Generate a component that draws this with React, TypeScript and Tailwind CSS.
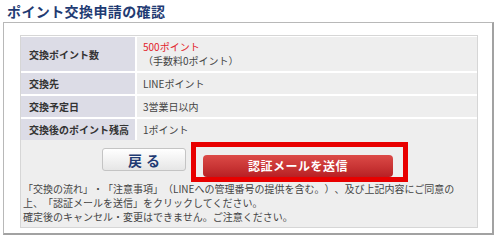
const rows = [
  { label: '交換先', value: 'LINEポイント' },
  { label: '交換予定日', value: '3営業日以内' },
  { label: '交換後のポイント残高', value: '1ポイント' },
];

export default function App() {
  return (
    <div className="w-[500px] h-[239px] bg-white font-['Noto_Sans_CJK_JP','Noto_Sans',sans-serif] text-[#444] [text-spacing-trim:space-all]">
      {/* Title */}
      <div className="h-[22px] pl-[7px] pt-[2px] text-[14px] leading-[18px] font-bold tracking-[0.4px] text-[#1f3b73]">
        ポイント交換申請の確認
      </div>

      {/* Outer frame */}
      <div className="ml-[3px] w-[491px] h-[213px] border border-[#b8b8b8] border-r-2 border-b-2 border-r-[#a2a2a2] border-b-[#a2a2a2] pl-[16px] pt-[12px]">
        <div className="w-[458px] h-[193px] border border-[#d6d6d6] bg-[#eeeeee]">
          {/* Table */}
          <div className="grid grid-cols-[114px_1fr] gap-x-[2px] gap-y-[2px] bg-white pt-px text-[10px]">
            <div className="h-[34px] flex items-center pl-[8px] bg-[#dcdce6] font-bold text-[#333]">
              交換ポイント数
            </div>
            <div className="h-[34px] flex flex-col justify-center pl-[6px] bg-[#eeeeee] leading-[14px]">
              <span className="text-[#e2232a]">500ポイント</span>
              <span>（手数料0ポイント）</span>
            </div>
            {rows.map((r) => (
              <div key={r.label} className="contents">
                <div className="h-[21px] flex items-center pl-[8px] bg-[#dcdce6] font-bold text-[#333]">
                  {r.label}
                </div>
                <div className="h-[21px] flex items-center pl-[6px] bg-[#eeeeee]">{r.value}</div>
              </div>
            ))}
          </div>

          {/* Buttons */}
          <div className="flex items-start pl-[81px] mt-[2px]">
            <button className="mt-[6px] w-[84px] h-[23px] rounded-[3px] border border-[#c4c4c4] bg-gradient-to-b from-white to-[#e6e6e6] text-[14px] leading-none font-bold text-[#1f3b73] tracking-[4px] pl-[4px]">
              戻る
            </button>
            <div className="ml-[5px] w-[217px] h-[40px] border-[5px] border-[#e80000] pl-[7px] pt-[5px]">
              <button className="w-[190px] h-[22px] rounded-[4px] bg-gradient-to-b from-[#dc4a47] to-[#b81f24] text-[12px] leading-none font-bold text-white tracking-[0.5px]">
                認証メールを送信
              </button>
            </div>
          </div>

          {/* Notes */}
          <div className="pl-[2px] text-[10px] leading-[14px] text-[#444]">
            <p>「交換の流れ」・「注意事項」（LINEへの管理番号の提供を含む。）、及び上記内容にご同意の</p>
            <p>上、「認証メールを送信」をクリックしてください。</p>
            <p>確定後のキャンセル・変更はできません。ご注意ください。</p>
          </div>
        </div>
      </div>
    </div>
  );
}
